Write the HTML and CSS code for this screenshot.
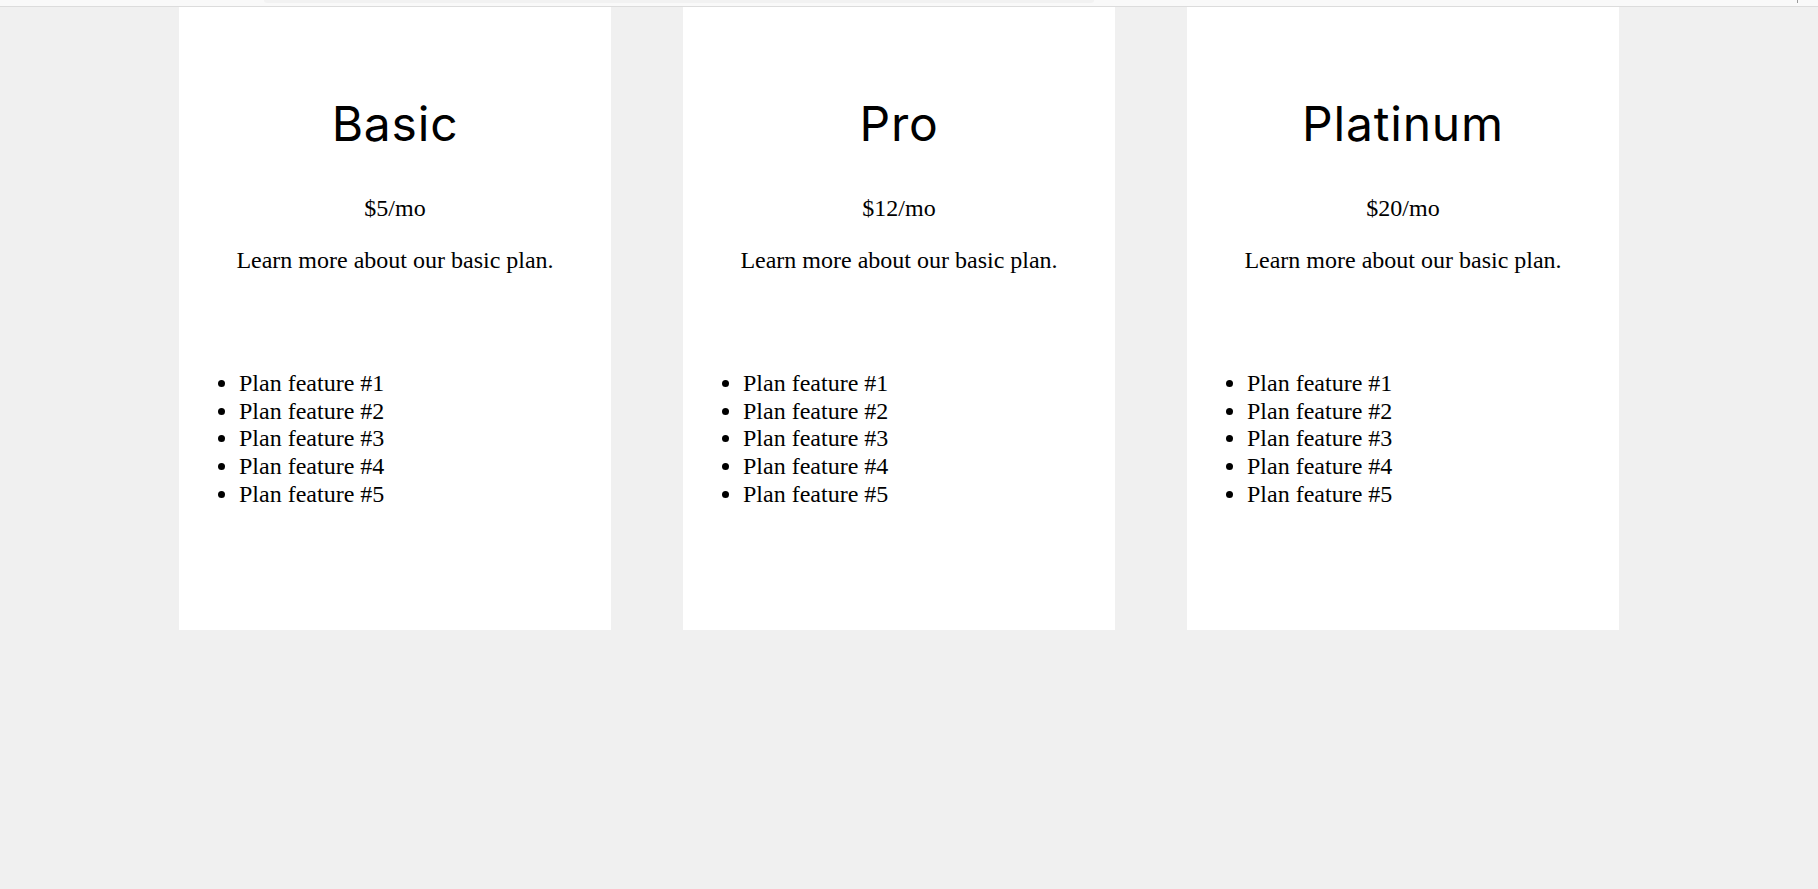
FILE: index.html
```html
<!DOCTYPE html>
<html lang="en">
<head>
<meta charset="utf-8">
<title>Pricing</title>
<link rel="stylesheet" href="styles.css">
</head>
<body>
<div class="topbar"><span class="topbar-shade"></span><span class="topbar-tick"></span></div>
<main class="plans">
  <section class="plan">
    <h1 class="plan-title">Basic</h1>
    <p class="plan-price">$5/mo</p>
    <p class="plan-desc">Learn more about our basic plan.</p>
    <ul class="plan-features">
      <li>Plan feature #1</li>
      <li>Plan feature #2</li>
      <li>Plan feature #3</li>
      <li>Plan feature #4</li>
      <li>Plan feature #5</li>
    </ul>
  </section>
  <section class="plan">
    <h1 class="plan-title">Pro</h1>
    <p class="plan-price">$12/mo</p>
    <p class="plan-desc">Learn more about our basic plan.</p>
    <ul class="plan-features">
      <li>Plan feature #1</li>
      <li>Plan feature #2</li>
      <li>Plan feature #3</li>
      <li>Plan feature #4</li>
      <li>Plan feature #5</li>
    </ul>
  </section>
  <section class="plan">
    <h1 class="plan-title">Platinum</h1>
    <p class="plan-price">$20/mo</p>
    <p class="plan-desc">Learn more about our basic plan.</p>
    <ul class="plan-features">
      <li>Plan feature #1</li>
      <li>Plan feature #2</li>
      <li>Plan feature #3</li>
      <li>Plan feature #4</li>
      <li>Plan feature #5</li>
    </ul>
  </section>
</main>
</body>
</html>
```

FILE: styles.css
```css
html, body {
  margin: 0;
  padding: 0;
}

body {
  background: #f0f0f0;
  font-family: "Liberation Serif", "Times New Roman", serif;
  font-size: 24px;
  line-height: 1.15;
  color: #000;
}

.topbar {
  height: 6px;
  background: #f9f9f9;
  border-bottom: 1px solid #dcdcdc;
  display: flex;
  align-items: flex-start;
}

.topbar-shade {
  margin-left: 264px;
  width: 830px;
  height: 3px;
  background: #f2f2f2;
  border-radius: 0 0 4px 4px;
}

.topbar-tick {
  margin-left: auto;
  margin-right: 20px;
  width: 1px;
  height: 3px;
  background: #9a9a9a;
}

.plans {
  display: flex;
  align-items: flex-start;
  gap: 72px;
  padding-left: 179px;
}

.plan {
  width: 432px;
  box-sizing: border-box;
  background: #fff;
  padding: 88px 20px 122px;
}

.plan-title {
  margin: 0 0 42px;
  font-family: Inter, "Noto Sans", sans-serif;
  font-weight: 400;
  font-size: 48px;
  line-height: 58px;
  letter-spacing: 0.8px;
  text-align: center;
}

.plan-price {
  margin: 0 0 24px;
  text-align: center;
}

.plan-desc {
  margin: 0 0 96px;
  text-align: center;
}

.plan-features {
  margin: 0;
  padding-left: 40px;
}
```
